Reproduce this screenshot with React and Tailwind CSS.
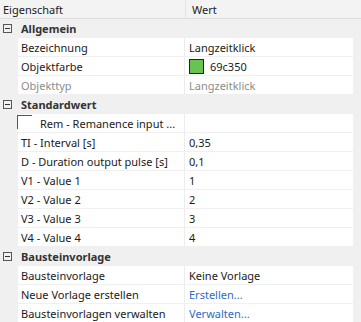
import React from "react";

function Minus() {
  return (
    <svg width="9" height="9" viewBox="0 0 9 9" className="shrink-0">
      <rect x="0.5" y="0.5" width="8" height="8" fill="none" stroke="#555" strokeWidth="1" />
      <line x1="2" y1="4.5" x2="7" y2="4.5" stroke="#333" strokeWidth="1" />
    </svg>
  );
}

function Category({ title }) {
  return (
    <div className="h-[19px] flex items-center">
      <div className="w-[21px] pl-[3px] flex items-center">
        <Minus />
      </div>
      <span className="font-bold text-[#333]">{title}</span>
    </div>
  );
}

function Row({ label, value, labelClass = "text-[#1a1a1a]", valueClass = "text-[#1a1a1a]" }) {
  return (
    <div className="h-[19px] flex">
      <div className="w-[18px] shrink-0" />
      <div className="w-[335px] shrink-0 flex bg-white border-b border-[#f0f0f0]">
        <div className={"w-[167px] shrink-0 pl-[3px] flex items-center border-r border-[#ececec] whitespace-nowrap " + labelClass}>
          {label}
        </div>
        <div className={"flex-1 pl-[4px] flex items-center whitespace-nowrap " + valueClass}>{value}</div>
      </div>
    </div>
  );
}

export default function App() {
  return (
    <div
      className="w-[361px] h-[322px] overflow-hidden bg-[#f0f0f0] text-[11px] leading-[19px]"
      style={{ fontFamily: '"Noto Sans", "Open Sans", sans-serif' }}
    >
      <div className="h-[19px] flex bg-[#f3f3f3] border-b border-[#dcdcdc] text-[#1a1a1a]">
        <div className="w-[186px] pl-[3px] border-r border-[#e2e2e2] flex items-center">Eigenschaft</div>
        <div className="pl-[6px] flex items-center">Wert</div>
      </div>

      <Category title="Allgemein" />
      <Row label="Bezeichnung" value="Langzeitklick" />
      <Row
        label="Objektfarbe"
        value={
          <span className="flex items-center">
            <span className="w-[15px] h-[15px] shrink-0 bg-[#69c350] border border-[#222] mr-[6px]" />
            69c350
          </span>
        }
      />
      <Row label="Objekttyp" value="Langzeitklick" labelClass="text-[#8c8c8c]" valueClass="text-[#8c8c8c]" />

      <Category title="Standardwert" />
      <Row
        label={
          <span className="flex items-center">
            <span className="w-[15px] h-[14px] shrink-0 border-t border-l border-[#555] mr-[8px] -ml-[4px] relative top-[-1px]" />
            Rem - Remanence input ...
          </span>
        }
        value=""
      />
      <Row label="TI - Interval [s]" value="0,35" />
      <Row label="D - Duration output pulse [s]" value="0,1" />
      <Row label="V1 - Value 1" value="1" />
      <Row label="V2 - Value 2" value="2" />
      <Row label="V3 - Value 3" value="3" />
      <Row label="V4 - Value 4" value="4" />

      <Category title="Bausteinvorlage" />
      <Row label="Bausteinvorlage" value="Keine Vorlage" />
      <Row label="Neue Vorlage erstellen" value="Erstellen..." valueClass="text-[#2e6bc6]" />
      <Row label="Bausteinvorlagen verwalten" value="Verwalten..." valueClass="text-[#2e6bc6]" />
    </div>
  );
}
